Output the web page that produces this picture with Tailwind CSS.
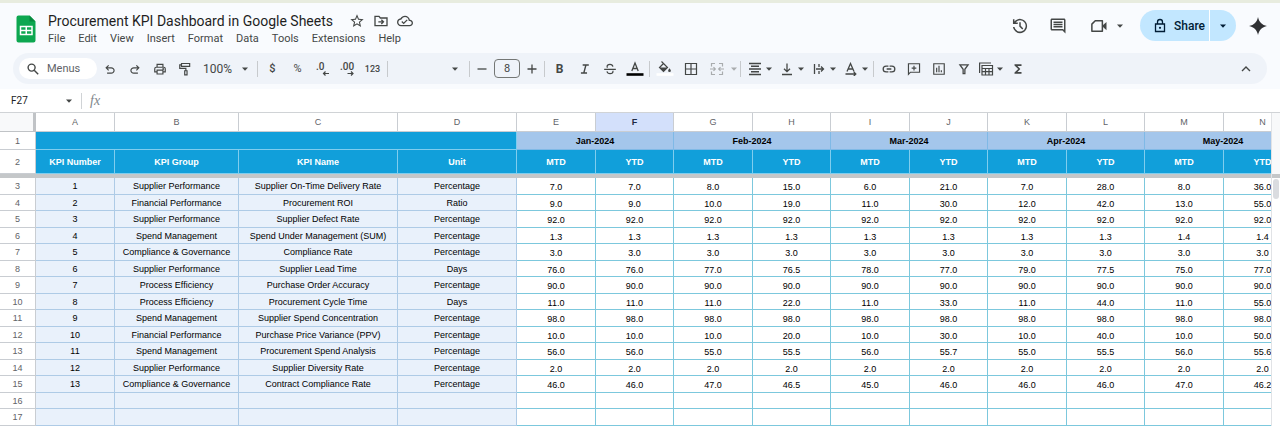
<!DOCTYPE html>
<html lang="en">
<head>
    <meta charset="UTF-8">
    <meta name="viewport" content="width=device-width, initial-scale=1.0">
    <title>Procurement KPI Dashboard in Google Sheets</title>
    <script src="https://cdn.jsdelivr.net/npm/@tailwindcss/browser@4"></script>
</head>
<body class="h-screen flex flex-col overflow-hidden bg-white font-['Roboto',sans-serif] text-[#444746]">
    <!-- Shared icon shapes -->
    <svg class="hidden">
        <symbol id="caret" viewBox="0 0 8 8"><path fill="currentColor" d="M1 2.5h6L4 5.8z"/></symbol>
    </svg>

    <!-- Title bar -->
    <header class="bg-[#f9fbfe] border-t-3 border-[#e8ecdf] flex items-start justify-between pl-4 pr-3 pb-0.5">
        <div class="flex gap-3 pt-2">
            <a href="#" aria-label="Sheets home" class="mt-1">
                <svg class="w-5 h-7" viewBox="0 0 20 28">
                    <path fill="#0da750" d="M2.5.5h11L19.500 6.500v19a2 2 0 0 1-2 2h-15a2 2 0 0 1-2-2v-23a2 2 0 0 1 2-2z"/>
                    <path fill="#078a3e" d="M13.500.5l6 6h-6z"/>
                    <path fill="none" stroke="#fff" stroke-width="1.500" d="M4.500 11.500h11.500v8H4.500zM4.500 15.500H16M10.250 11.500v8"/>
                </svg>
            </a>
            <div>
                <div class="flex items-center gap-2 h-5">
                    <h1 class="text-[14px] leading-5 text-[#1f1f1f] mr-1">Procurement KPI Dashboard in Google Sheets</h1>
                    <button aria-label="Star" class="w-4 h-4 ml-1">
                        <svg class="w-4 h-4" viewBox="0 0 24 24" fill="currentColor"><path d="M22 9.240l-7.190-.62L12 2 9.190 8.630 2 9.240l5.460 4.730L5.820 21 12 17.270 18.180 21l-1.630-7.030L22 9.240zM12 15.400l-3.760 2.270 1-4.280-3.320-2.880 4.380-.38L12 6.100l1.710 4.040 4.380.38-3.320 2.880 1 4.280L12 15.400z"/></svg>
                    </button>
                    <button aria-label="Move" class="w-4 h-4">
                        <svg class="w-4 h-4" viewBox="0 0 24 24" fill="none" stroke="currentColor" stroke-width="2"><path d="M3 5h6l2 2.500h10V19H3zM8 13.200h7.500M12.500 10l3.200 3.200-3.200 3.200"/></svg>
                    </button>
                    <button aria-label="Document status" class="w-4 h-4">
                        <svg class="w-4 h-4" viewBox="0 0 24 24" fill="currentColor"><path d="M19.350 10.040C18.670 6.590 15.640 4 12 4 9.110 4 6.600 5.640 5.350 8.040 2.340 8.360 0 10.910 0 14c0 3.310 2.690 6 6 6h13c2.760 0 5-2.240 5-5 0-2.640-2.050-4.780-4.650-4.960zM19 18H6c-2.210 0-4-1.790-4-4 0-2.050 1.530-3.760 3.560-3.970l1.070-.11.5-.95C8.080 7.140 9.940 6 12 6c2.620 0 4.880 1.860 5.390 4.430l.3 1.500 1.530.11c1.560.1 2.780 1.410 2.780 2.960 0 1.650-1.350 3-3 3zm-9-3.820l-2.090-2.090L6.500 13.500 10 17l6.010-6.010-1.410-1.410z"/></svg>
                    </button>
                </div>
                <nav class="flex gap-[13px] text-[11px] leading-4">
                    <button>File</button>
                    <button>Edit</button>
                    <button>View</button>
                    <button>Insert</button>
                    <button>Format</button>
                    <button>Data</button>
                    <button>Tools</button>
                    <button>Extensions</button>
                    <button>Help</button>
                </nav>
            </div>
        </div>
        <div class="flex items-center pt-[7px]">
            <button aria-label="Version history" class="mr-5">
                <svg class="w-[18px] h-[18px]" viewBox="0 0 24 24" fill="currentColor"><path d="M12 21.500a9.500 9.500 0 0 1-9.430-8.300h2.040A7.500 7.500 0 1 0 6.100 7.300H9v2H2.600V2.900h2v3.080A9.500 9.500 0 1 1 12 21.500zM15 16.600l-4-4V7h2v4.800l3.400 3.400z"/></svg>
            </button>
            <button aria-label="Comments" class="mr-[23px]">
                <svg class="w-[18px] h-[18px]" viewBox="0 0 24 24" fill="currentColor"><path d="M21.990 4c0-1.100-.89-2-1.990-2H4c-1.100 0-2 .9-2 2v12c0 1.100.9 2 2 2h14l4 4-.01-18zM20 4v13.170L18.830 16H4V4h16zM6 12h12v2H6zm0-3h12v2H6zm0-3h12v2H6z"/></svg>
            </button>
            <button aria-label="Join a call" class="flex items-center gap-2 mr-4">
                <svg class="w-[18px] h-[18px]" viewBox="0 0 24 24"><path fill="none" stroke="currentColor" stroke-width="2" stroke-linejoin="round" d="M7 5h9.500v14H2.500V9.500z"/><path fill="currentColor" d="M17 11l5-4.500v11L17 13z"/></svg>
                <svg class="w-2 h-2"><use href="#caret"/></svg>
            </button>
            <div class="flex h-[31px] mr-3 text-[#001d35]">
                <button class="flex items-center gap-2 w-[70px] pl-3.5 rounded-l-full bg-[#c2e7ff] border-r border-white text-[12px] font-medium">
                    <svg class="w-3 h-4 shrink-0" viewBox="0 0 12 16"><path fill="none" stroke="currentColor" stroke-width="1.300" d="M1.500 6h9v7.500h-9zM3.500 6V4a2.500 2.500 0 0 1 5 0v2"/><circle cx="6" cy="9.800" r="1.100" fill="currentColor"/></svg>
                    Share
                </button>
                <button aria-label="Sharing options" class="flex items-center justify-center w-[26px] rounded-r-full bg-[#c2e7ff]">
                    <svg class="w-2 h-2"><use href="#caret"/></svg>
                </button>
            </div>
            <button aria-label="Gemini">
                <svg class="w-5 h-5" viewBox="0 0 20 20"><path fill="#303134" d="M10 1C11 6 14 9 19 10C14 11 11 14 10 19C9 14 6 11 1 10C6 9 9 6 10 1z"/></svg>
            </button>
        </div>
    </header>

    <!-- Toolbar -->
    <div class="bg-[#f9fbfe] px-[13px] pt-1 pb-[5px]">
        <div role="toolbar" class="flex items-center h-[31px] rounded-full bg-[#eff3f9] pl-1.5 pr-3">
            <label class="flex items-center gap-2 w-[78px] h-[21px] rounded-full bg-white pl-2 mr-px">
                <svg class="w-3 h-3 shrink-0" viewBox="0 0 12 12" fill="none" stroke="currentColor" stroke-width="1.400"><circle cx="4.600" cy="4.600" r="3.500"/><path d="M7.200 7.200l4 4"/></svg>
                <input type="text" aria-label="Search the menus" placeholder="Menus" class="w-11 h-4 pt-px text-[11px] leading-4 outline-none placeholder:text-[#5f6368]">
            </label>
            <div class="flex gap-px">
                <button aria-label="Undo" class="flex justify-center w-6">
                    <svg class="w-3.5 h-3.5" viewBox="0 0 24 24" fill="currentColor"><path d="M7 20v-2h7.100q1.575 0 2.738-1T18 14.500t-1.162-2.500T14.100 11H7.800l2.600 2.600L9 15l-5-5 5-5 1.400 1.400L7.800 9h6.300q2.425 0 4.163 1.575T20 14.500t-1.737 3.925T14.100 20z"/></svg>
                </button>
                <button aria-label="Redo" class="flex justify-center w-6">
                    <svg class="w-3.5 h-3.5" viewBox="0 0 24 24" fill="currentColor"><path d="M9.900 20q-2.425 0-4.162-1.575T4 14.500t1.738-3.925T9.900 9h6.300l-2.600-2.600L15 5l5 5-5 5-1.400-1.400 2.600-2.600H9.900q-1.575 0-2.738 1T6 14.500t1.163 2.500 2.737 1H17v2z"/></svg>
                </button>
                <button aria-label="Print" class="flex justify-center w-6">
                    <svg class="w-3.5 h-3.5" viewBox="0 0 24 24" fill="none" stroke="currentColor" stroke-width="2"><path d="M7 9V4h10v5M7 17H3v-5.500Q3 9 5.500 9h13Q21 9 21 11.500V17h-4M7 14h10v6.500H7z"/><circle cx="17.500" cy="12" r=".6"/></svg>
                </button>
                <button aria-label="Paint format" class="flex justify-center w-6">
                    <svg class="w-3.5 h-3.5" viewBox="0 0 24 24" fill="none" stroke="currentColor" stroke-width="2"><path d="M6 2.500h14v5H6zM6 5H3v6h10.500v4M11.500 15h4v7h-4z"/></svg>
                </button>
            </div>
            <div class="grid items-center w-[61px] border-r border-[#c7cacd]">
                <select aria-label="Zoom" class="col-start-1 row-start-1 appearance-none w-full h-4 pl-1.5 text-[12px] leading-4 outline-none">
                    <option>100%</option>
                    <option>75%</option>
                    <option>50%</option>
                </select>
                <svg class="col-start-1 row-start-1 justify-self-end w-2 h-2 mr-2 pointer-events-none"><use href="#caret"/></svg>
            </div>
            <div class="flex items-center h-4 px-0.5 border-r border-[#c7cacd] text-[11px] leading-4">
                <button class="w-[25px] font-medium">$</button>
                <button class="w-[25px]">%</button>
                <button aria-label="Decrease decimal places" class="w-[25px] flex justify-center">
                    <svg class="w-4 h-4" viewBox="0 0 16 16"><text x="1" y="9" font-size="10" font-weight="500" fill="currentColor">.0</text><path fill="none" stroke="currentColor" stroke-width="1.200" d="M14 12.500H8.500M10.500 10.500l-2 2 2 2"/></svg>
                </button>
                <button aria-label="Increase decimal places" class="w-[25px] flex justify-center">
                    <svg class="w-4 h-4" viewBox="0 0 16 16"><text x="0" y="9" font-size="10" font-weight="500" fill="currentColor">.00</text><path fill="none" stroke="currentColor" stroke-width="1.200" d="M7.500 12.500H13M11 10.500l2 2-2 2"/></svg>
                </button>
                <button aria-label="More formats" class="w-[25px] text-[9px] font-medium">123</button>
            </div>
            <div class="grid items-center w-[82px] border-r border-[#c7cacd]">
                <select aria-label="Font" class="col-start-1 row-start-1 appearance-none w-full h-4 text-[11px] leading-4 outline-none">
                    <option></option>
                    <option>Arial</option>
                </select>
                <svg class="col-start-1 row-start-1 justify-self-end w-2 h-2 mr-2.5 pointer-events-none"><use href="#caret"/></svg>
            </div>
            <div class="flex items-center h-4 border-r border-[#c7cacd]">
                <button aria-label="Decrease font size" class="w-6 flex justify-center"><svg class="w-2.5 h-2.5" viewBox="0 0 10 10" stroke="currentColor" stroke-width="1.300"><path d="M.5 5h9"/></svg></button>
                <input type="text" aria-label="Font size" value="8" class="w-[26px] h-[19px] rounded border border-[#747775] text-center text-[11px] outline-none">
                <button aria-label="Increase font size" class="w-6 flex justify-center"><svg class="w-2.5 h-2.5" viewBox="0 0 10 10" stroke="currentColor" stroke-width="1.300"><path d="M.5 5h9M5 .5v9"/></svg></button>
            </div>
            <div class="flex items-center h-4 px-0.5 border-r border-[#c7cacd]">
                <button aria-label="Bold" class="w-[25px] text-[12px] leading-4 font-bold">B</button>
                <button aria-label="Italic" class="w-[25px] flex justify-center"><svg class="w-3.5 h-3.5" viewBox="0 0 24 24" fill="currentColor"><path d="M5 20v-2.500h4L12 6.500H8V4h10.500v2.500h-4l-3 11h4V20z"/></svg></button>
                <button aria-label="Strikethrough" class="w-[25px] flex justify-center">
                    <svg class="w-3.5 h-3.5" viewBox="0 0 24 24" fill="none" stroke="currentColor" stroke-width="2"><path d="M2 12.500h20M17 8c-.5-2.600-2.400-4-5-4-2.900 0-5 1.500-5 3.800 0 .8.200 1.400.6 2M6.800 16c.6 2.600 2.500 4 5.300 4 3 0 5-1.500 5-3.700 0-.6-.1-1-.3-1.300"/></svg>
                </button>
                <button aria-label="Text color" class="w-[25px] flex justify-center"><svg class="w-[18px] h-4" viewBox="0 0 18 16"><path fill="none" stroke="currentColor" stroke-width="1.300" d="M5.800 10L9 2l3.200 8M6.800 7.500h4.400"/><path fill="#000" d="M.5 12.200h17v2.600H.5z"/></svg></button>
            </div>
            <div class="flex items-center h-4 px-0.5 border-r border-[#c7cacd]">
                <button aria-label="Fill color" class="w-[26px] flex justify-center">
                    <svg class="w-[18px] h-4" viewBox="0 0 18 16"><path fill="none" stroke="currentColor" stroke-width="1.200" d="M5.500.5l6 6-4 4-4-4 4-4"/><path fill="currentColor" d="M3.500 6.500h8l-4 4zM13.500 7.200q1.400 1.800 1.400 2.500a1.400 1.400 0 0 1-2.800 0q0-.7 1.400-2.500z"/><path fill="#fff" d="M.5 12.200h17v2.600H.5z"/></svg>
                </button>
                <button aria-label="Borders" class="w-[26px] flex justify-center"><svg class="w-3.5 h-3.5" viewBox="0 0 14 14" fill="none" stroke="currentColor" stroke-width="1.200"><path d="M1.500 1.500h11v11h-11zM7 1.500v11M1.500 7h11"/></svg></button>
                <button aria-label="Merge cells" class="w-[26px] flex justify-center text-[#a9acae]">
                    <svg class="w-3.5 h-3.5" viewBox="0 0 14 14" fill="none" stroke="currentColor" stroke-width="1.200"><path d="M5 1.500H1.500v3M9 1.500h3.500v3M5 12.500H1.500v-3M9 12.500h3.500v-3M0 7h5M14 7H9M3.500 5.200L5.300 7 3.500 8.800M10.500 5.200L8.700 7l1.800 1.800"/></svg>
                </button>
                <button aria-label="Merge options" class="text-[#a9acae]"><svg class="w-2 h-2"><use href="#caret"/></svg></button>
            </div>
            <div class="flex items-center gap-1 h-4 px-1 border-r border-[#c7cacd]">
                <button aria-label="Horizontal align" class="flex items-center">
                    <svg class="w-5 h-3.5" viewBox="0 0 20 14" stroke="currentColor" stroke-width="1.300"><path d="M4 1.500h12M6 4.250h8M4 7h12M6 9.750h8M4 12.500h12"/></svg>
                    <svg class="w-2 h-2"><use href="#caret"/></svg>
                </button>
                <button aria-label="Vertical align" class="flex items-center">
                    <svg class="w-5 h-3.5" viewBox="0 0 20 14" fill="none" stroke="currentColor" stroke-width="1.300"><path d="M5 12.500h10M10 1.500v8M7 6.700l3 3 3-3"/></svg>
                    <svg class="w-2 h-2"><use href="#caret"/></svg>
                </button>
                <button aria-label="Text wrapping" class="flex items-center">
                    <svg class="w-5 h-3.5" viewBox="0 0 20 14" fill="none" stroke="currentColor" stroke-width="1.300"><path d="M5.500 2v10M10 2v3M10 9v3M7 7h7.500M12 4.500L14.500 7 12 9.500"/></svg>
                    <svg class="w-2 h-2"><use href="#caret"/></svg>
                </button>
                <button aria-label="Text rotation" class="flex items-center">
                    <svg class="w-5 h-3.5" viewBox="0 0 20 14" fill="none" stroke="currentColor" stroke-width="1.300"><path d="M6 9.500l3.500-8 3.500 8M7.200 7h4.600M4.500 12h10M12.800 10l2 2-2 2"/></svg>
                    <svg class="w-2 h-2"><use href="#caret"/></svg>
                </button>
            </div>
            <div class="flex items-center h-4 px-0.5">
                <button aria-label="Insert link" class="w-[25px] flex justify-center"><svg class="w-3.5 h-3.5" viewBox="0 0 24 24" fill="none" stroke="currentColor" stroke-width="2.200"><path d="M11 7H7a5 5 0 0 0 0 10h4M13 7h4a5 5 0 0 1 0 10h-4M8 12h8"/></svg></button>
                <button aria-label="Insert comment" class="w-[25px] flex justify-center"><svg class="w-3.5 h-3.5" viewBox="0 0 24 24" fill="none" stroke="currentColor" stroke-width="2"><path d="M2.500 21V3h19v14.500H6zM12 6.500v8M8 10.500h8"/></svg></button>
                <button aria-label="Insert chart" class="w-[25px] flex justify-center"><svg class="w-3.5 h-3.5" viewBox="0 0 24 24" fill="none" stroke="currentColor" stroke-width="2"><path d="M3 3h18v18H3zM8 10v7.500M12 6.500v11M16 14v3.500"/></svg></button>
                <button aria-label="Create a filter" class="w-[25px] flex justify-center"><svg class="w-3.5 h-3.5" viewBox="0 0 24 24" fill="none" stroke="currentColor" stroke-width="2.200"><path d="M5 5h14l-5.500 7.500V20h-3v-7.500z"/></svg></button>
                <button aria-label="Table views" class="flex items-center mr-1">
                    <svg class="w-5 h-3.5" viewBox="0 0 20 14" fill="none" stroke="currentColor" stroke-width="1.200"><path d="M3.600 11V1h11.400M6 3.500h10.500v9.500H6zM6 6.500h10.500M6 9.700h10.500M9.500 6.500v6.500M13 6.500v6.500"/></svg>
                    <svg class="w-2 h-2"><use href="#caret"/></svg>
                </button>
                <button aria-label="Functions" class="w-5 flex justify-center"><svg class="w-3.5 h-3.5" viewBox="0 0 24 24" fill="currentColor"><path d="M6 20v-2l6.500-6L6 6V4h12v3h-7l5 5-5 5h7v3z"/></svg></button>
            </div>
            <button aria-label="Hide the menus" class="ml-auto mr-1">
                <svg class="w-2.5 h-2.5" viewBox="0 0 10 10" fill="none" stroke="currentColor" stroke-width="1.400"><path d="M1 7l4-4 4 4"/></svg>
            </button>
        </div>
    </div>

    <!-- Formula bar -->
    <div class="flex items-center h-6 pl-[11px] border-b border-[#d0d3d6]">
        <input type="text" aria-label="Name box" value="F27" class="w-[54px] text-[10px] text-[#202124] outline-none">
        <button aria-label="Named ranges"><svg class="w-2 h-2"><use href="#caret"/></svg></button>
        <label for="formula" class="ml-2 pl-2 h-4 border-l border-[#d0d3d6] font-['Liberation_Serif',serif] italic text-[14px] leading-4 text-[#80868b]">fx</label>
        <input type="text" id="formula" class="flex-1 ml-2 text-[11px] outline-none">
    </div>

    <!-- Sheet -->
    <main class="flex flex-1 min-h-0">
        <div class="flex-1 min-w-0 overflow-hidden">
            <table class="table-fixed w-[1302px] border-separate border-spacing-0 text-center font-['Liberation_Sans',sans-serif] text-[9px] leading-3 text-black">
                <colgroup>
                    <col class="w-9"><col class="w-[79px]"><col class="w-[124px]"><col class="w-[159px]"><col class="w-[119px]">
                    <col class="w-[79px]"><col class="w-[78px]"><col class="w-[79px]"><col class="w-[78px]"><col class="w-[79px]">
                    <col class="w-[78px]"><col class="w-[79px]"><col class="w-[78px]"><col class="w-[79px]"><col class="w-[78px]">
                </colgroup>
                <thead id="sheetHead"></thead>
                <tbody id="sheetBody"></tbody>
            </table>
        </div>
        <div class="w-[9px] border-l border-[#e1e3e6]">
            <div class="h-[61px] bg-[#f8f9fa]"></div>
            <div class="h-1 bg-[#c4c7c9]"></div>
            <div class="h-5 w-1.5 mt-px mx-auto rounded-full bg-[#dadce0]"></div>
        </div>
    </main>

    <script>
        const letters = ['A', 'B', 'C', 'D', 'E', 'F', 'G', 'H', 'I', 'J', 'K', 'L', 'M', 'N'];
        const months = ['Jan-2024', 'Feb-2024', 'Mar-2024', 'Apr-2024', 'May-2024'];
        const kpis = [
            ['Supplier Performance', 'Supplier On-Time Delivery Rate', 'Percentage', '7.0 7.0 8.0 15.0 6.0 21.0 7.0 28.0 8.0 36.0'],
            ['Financial Performance', 'Procurement ROI', 'Ratio', '9.0 9.0 10.0 19.0 11.0 30.0 12.0 42.0 13.0 55.0'],
            ['Supplier Performance', 'Supplier Defect Rate', 'Percentage', '92.0 92.0 92.0 92.0 92.0 92.0 92.0 92.0 92.0 92.0'],
            ['Spend Management', 'Spend Under Management (SUM)', 'Percentage', '1.3 1.3 1.3 1.3 1.3 1.3 1.3 1.3 1.4 1.4'],
            ['Compliance & Governance', 'Compliance Rate', 'Percentage', '3.0 3.0 3.0 3.0 3.0 3.0 3.0 3.0 3.0 3.0'],
            ['Supplier Performance', 'Supplier Lead Time', 'Days', '76.0 76.0 77.0 76.5 78.0 77.0 79.0 77.5 75.0 77.0'],
            ['Process Efficiency', 'Purchase Order Accuracy', 'Percentage', '90.0 90.0 90.0 90.0 90.0 90.0 90.0 90.0 90.0 90.0'],
            ['Process Efficiency', 'Procurement Cycle Time', 'Days', '11.0 11.0 11.0 22.0 11.0 33.0 11.0 44.0 11.0 55.0'],
            ['Spend Management', 'Supplier Spend Concentration', 'Percentage', '98.0 98.0 98.0 98.0 98.0 98.0 98.0 98.0 98.0 98.0'],
            ['Financial Performance', 'Purchase Price Variance (PPV)', 'Percentage', '10.0 10.0 10.0 20.0 10.0 30.0 10.0 40.0 10.0 50.0'],
            ['Spend Management', 'Procurement Spend Analysis', 'Percentage', '56.0 56.0 55.0 55.5 56.0 55.7 55.0 55.5 56.0 55.6'],
            ['Supplier Performance', 'Supplier Diversity Rate', 'Percentage', '2.0 2.0 2.0 2.0 2.0 2.0 2.0 2.0 2.0 2.0'],
            ['Compliance & Governance', 'Contract Compliance Rate', 'Percentage', '46.0 46.0 47.0 46.5 45.0 46.0 46.0 46.0 47.0 46.2']
        ];

        const rowHead = 'border-r border-b border-[#c9cdd2] font-normal text-[#5f6368]';
        const titleCell = 'border-r border-b border-[#7fcdee] bg-[#119fda] text-white font-bold';
        const infoCell = 'p-0 border-r border-b border-[#aecbe6] bg-[#e9f1fb]';
        const valueCell = 'p-0 pt-0.5 border-r border-b border-[#7cc8dd]';

        function renderHead() {
            const cols = letters.map(l =>
                `<th class="border-r border-b border-[#c9cdd2] ${l === 'F' ? 'bg-[#d3e0fb] font-bold text-[#1f2a44]' : 'font-normal text-[#5f6368]'}">${l}</th>`
            ).join('');
            const monthCells = months.map(m =>
                `<th colspan="2" class="border-r border-b border-[#7fb9e6] bg-[#a4c6eb] font-bold">${m}</th>`
            ).join('');
            const titles = ['KPI Number', 'KPI Group', 'KPI Name', 'Unit', ...months.flatMap(() => ['MTD', 'YTD'])];

            document.getElementById('sheetHead').innerHTML = `
                <tr class="h-[19px]"><th class="border-r-3 border-b border-[#c0c3c6] bg-[#f8f9fa]"></th>${cols}</tr>
                <tr class="h-[18px]"><th class="${rowHead}">1</th><th colspan="4" class="${titleCell}"></th>${monthCells}</tr>
                <tr class="h-6"><th class="${rowHead}">2</th>${titles.map(t => `<th class="${titleCell}">${t}</th>`).join('')}</tr>
                <tr class="h-1"><td colspan="15" class="p-0 bg-[#c4c7c9]"></td></tr>
            `;
        }

        function renderBody() {
            let html = '';
            for (let i = 0; i < 15; i++) {
                const kpi = kpis[i];
                const info = kpi ? [i + 1, kpi[0], kpi[1], kpi[2]] : ['', '', '', ''];
                const values = kpi ? kpi[3].split(' ') : Array(10).fill('');
                html += `<tr class="odd:h-[17px] even:h-4">
                    <th class="${rowHead}">${i + 3}</th>
                    ${info.map(v => `<td class="${infoCell}">${v}</td>`).join('')}
                    ${values.map(v => `<td class="${valueCell}">${v}</td>`).join('')}
                </tr>`;
            }
            document.getElementById('sheetBody').innerHTML = html;
        }

        renderHead();
        renderBody();
    </script>
</body>
</html>
